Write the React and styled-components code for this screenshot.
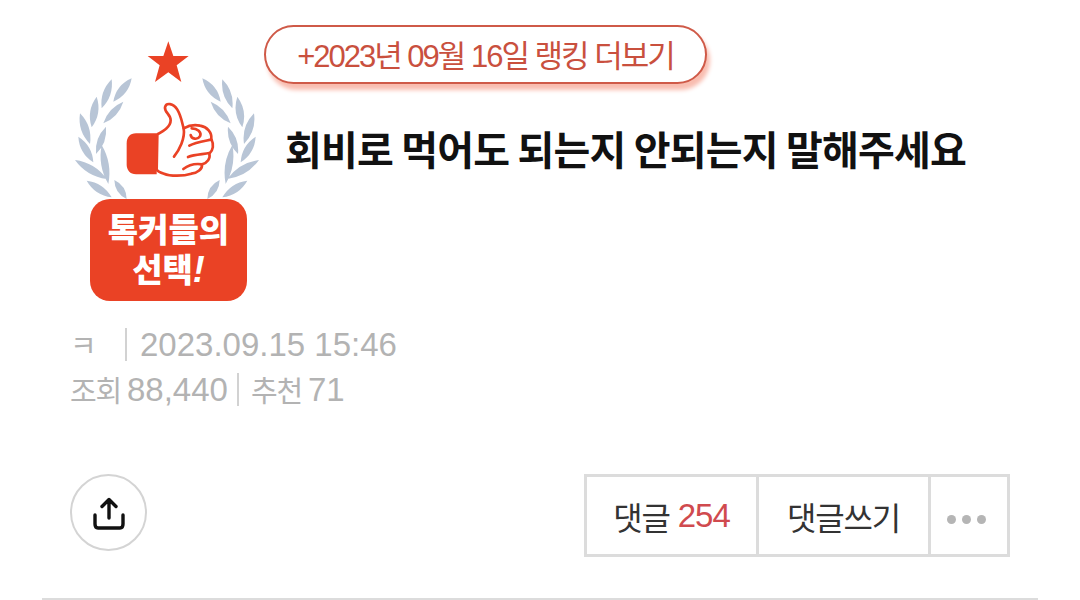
import React from "react";
import styled, { createGlobalStyle } from "styled-components";

const GlobalStyle = createGlobalStyle`
  html, body {
    margin: 0;
    background: #fff;
    font-family: "Liberation Sans", "Noto Sans CJK KR", sans-serif;
  }
`;

const Page = styled.div`
  width: 1080px;
  height: 600px;
  overflow: hidden;
  display: flex;
  flex-direction: column;
  box-sizing: border-box;
  padding: 24px 42px 0;
`;

const Header = styled.header`
  display: flex;
  align-items: flex-start;
  padding-left: 28px;
`;

const BadgeBox = styled.div`
  width: 194px;
  flex: none;
  display: flex;
  flex-direction: column;
  align-items: flex-start;
  padding-top: 6px;
`;

const BadgeArt = styled.svg`
  display: block;
  width: 194px;
  height: 190px;
`;

const BadgeLabel = styled.div`
  position: relative;
  box-sizing: border-box;
  margin: -21px 0 0 20px;
  padding-bottom: 2px;
  width: 157px;
  height: 102px;
  border-radius: 20px;
  background: #ea4225;
  color: #fff;
  display: flex;
  flex-direction: column;
  align-items: center;
  justify-content: center;
  font-family: "Noto Sans CJK KR", sans-serif;
  font-weight: 900;
  font-size: 33px;
  line-height: 40px;

  em {
    font-family: "Liberation Sans", sans-serif;
    font-size: 36px;
    font-weight: 700;
    font-style: italic;
  }
`;

const Content = styled.div`
  display: flex;
  flex-direction: column;
  align-items: flex-start;
`;

const MorePill = styled.a`
  box-sizing: border-box;
  width: 443px;
  height: 59px;
  margin-top: 1px;
  padding-bottom: 2px;
  display: flex;
  align-items: center;
  justify-content: center;
  border: 2.5px solid #cf5a48;
  border-radius: 30px;
  background: #fff;
  box-shadow: 3px 6px 4px #f9bdb0;
  color: #c9503e;
  font-family: "Liberation Sans", "Noto Sans CJK KR", sans-serif;
  font-size: 31px;
  letter-spacing: -2px;
  white-space: nowrap;
`;

const Title = styled.h1`
  margin: 36px 0 0 21px;
  color: #111;
  font-family: "Noto Sans CJK KR", sans-serif;
  font-size: 40px;
  line-height: 56px;
  font-weight: 700;
  letter-spacing: -0.8px;
  white-space: nowrap;
`;

const Meta = styled.div`
  margin: 21px 0 0 28px;
  color: #b3b3b3;
  font-size: 33px;
  line-height: 45px;
`;

const MetaRow = styled.div`
  display: flex;
  align-items: center;
  white-space: nowrap;
`;

const Hangul = styled.span`
  font-family: "Noto Sans CJK KR", sans-serif;
  font-size: 29px;
  letter-spacing: -1.2px;
  width: ${(p) => p.$width || "auto"};
  margin-right: ${(p) => p.$gap || "0"};
`;

const Bar = styled.span`
  width: 2px;
  height: 33px;
  background: #d2d2d2;
  margin: ${(p) => p.$margin};
`;

const Actions = styled.div`
  display: flex;
  align-items: center;
  justify-content: space-between;
  margin: 62px 28px 0;
`;

const ShareButton = styled.button`
  box-sizing: border-box;
  width: 77px;
  height: 77px;
  padding: 0;
  border: 2px solid #d4d4d4;
  border-radius: 50%;
  background: #fff;
  display: flex;
  align-items: center;
  justify-content: center;
  margin-top: -6px;
`;

const ShareIcon = styled.svg`
  display: block;
  width: 38px;
  height: 38px;
  margin-top: 6px;
`;

const ButtonGroup = styled.div`
  display: flex;
  box-sizing: border-box;
  height: 83px;
  border: 3px solid #dcdcdc;
`;

const GroupButton = styled.div`
  box-sizing: border-box;
  width: ${(p) => p.$width};
  display: flex;
  align-items: center;
  justify-content: center;
  gap: 8px;
  color: #333;
  font-family: "Noto Sans CJK KR", sans-serif;
  font-size: 32px;
  letter-spacing: -1.2px;
  white-space: nowrap;

  & + & {
    border-left: 3px solid #dcdcdc;
  }
`;

const Count = styled.span`
  color: #d04a4e;
  font-family: "Liberation Sans", sans-serif;
  font-size: 33px;
  letter-spacing: -1px;
`;

const Dots = styled.div`
  display: flex;
  gap: 6px;
  margin: 8px 5px 0 0;
`;

const Dot = styled.span`
  width: 9px;
  height: 9px;
  border-radius: 50%;
  background: #b5b5b5;
`;

const Divider = styled.hr`
  margin: auto 0 0;
  width: 100%;
  height: 2px;
  border: 0;
  background: #dcdcdc;
`;

// start x, start y, end x, end y, bulge
const leaves = [
  [160, 215, 215, 145, 16],
  [125, 235, 155, 148, 15],
  [130, 280, 190, 215, 14],
  [95, 292, 110, 200, 16],
  [108, 372, 138, 290, 14],
  [90, 342, 60, 250, 16],
  [100, 397, 55, 320, 15],
  [145, 462, 125, 345, 15],
  [140, 447, 45, 390, 16],
  [155, 502, 80, 452, 15],
  [200, 507, 163, 450, 14],
];

const leafPath = ([ax, ay, bx, by, w]) => {
  const mx = (ax + bx) / 2;
  const my = (ay + by) / 2;
  const len = Math.hypot(bx - ax, by - ay);
  const nx = ((by - ay) / len) * w * 1.5;
  const ny = (-(bx - ax) / len) * w * 1.5;
  return `M${ax} ${ay}Q${mx + nx} ${my + ny} ${bx} ${by}Q${mx - nx} ${my - ny} ${ax} ${ay}Z`;
};

function BadgeDrawing() {
  const wreath = leaves.map((leaf) => leafPath(leaf)).join("");
  return (
    <BadgeArt viewBox="30 0 582 570" aria-hidden="true">
      <path fill="#b8c5d6" d={wreath} />
      <path fill="#b8c5d6" d={wreath} transform="translate(642 0) scale(-1 1)" />
      <path
        fill="#ea4225"
        d="M325 34L340 78L386 78L350 106L364 156L325 127L285 156L299 106L263 78L310 78Z"
      />
      <g transform="translate(180 195)">
        <path
          fill="#ea4225"
          d="M110 115H48C30 115 20 127 20 145V208C20 226 30 238 48 238H110Z"
        />
        <path
          fill="#fff"
          stroke="#ea4225"
          strokeWidth="8"
          strokeLinejoin="round"
          d="M112 118C130 108 152 96 152 76C152 58 133 52 135 37C138 22 160 24 172 44C184 64 186 84 191 100C205 92 222 88 240 92C262 96 276 112 274 132C282 148 280 166 268 176C272 190 262 204 246 208C248 222 232 234 214 236C190 244 150 244 132 236C118 232 112 228 110 224Z"
        />
        <path
          fill="none"
          stroke="#ea4225"
          strokeWidth="8"
          strokeLinecap="round"
          d="M191 100C196 130 178 165 162 185M215 100C232 100 246 112 240 124C232 136 214 132 212 120M208 152C226 142 256 138 274 134M204 186C224 178 250 178 268 174M190 222C208 208 232 206 246 208"
        />
      </g>
    </BadgeArt>
  );
}

export default function App() {
  return (
    <>
      <GlobalStyle />
      <Page>
        <Header>
          <BadgeBox>
            <BadgeDrawing />
            <BadgeLabel>
              <div>톡커들의</div>
              <div>
                선택<em>!</em>
              </div>
            </BadgeLabel>
          </BadgeBox>
          <Content>
            <MorePill>+2023년 09월 16일 랭킹 더보기</MorePill>
            <Title>회비로 먹어도 되는지 안되는지 말해주세요</Title>
          </Content>
        </Header>
        <Meta>
          <MetaRow>
            <Hangul $width="55px">ㅋ</Hangul>
            <Bar $margin="0 13px 0 0" />
            2023.09.15 15:46
          </MetaRow>
          <MetaRow>
            <Hangul $gap="6px">조회</Hangul>
            88,440
            <Bar $margin="0 12px 0 9px" />
            <Hangul $gap="6px">추천</Hangul>
            71
          </MetaRow>
        </Meta>
        <Actions>
          <ShareButton aria-label="공유">
            <ShareIcon viewBox="0 0 38 38" fill="none" stroke="#111" strokeWidth="3.4" strokeLinecap="round" strokeLinejoin="round">
              <path d="M19 3V21M12 9.5L19 2.5L26 9.5" />
              <path d="M5 18V27C5 30 6 31 8 31H30C32 31 33 30 33 27V18" />
            </ShareIcon>
          </ShareButton>
          <ButtonGroup>
            <GroupButton $width="169px">
              댓글 <Count>254</Count>
            </GroupButton>
            <GroupButton $width="172px">댓글쓰기</GroupButton>
            <GroupButton $width="79px">
              <Dots>
                <Dot />
                <Dot />
                <Dot />
              </Dots>
            </GroupButton>
          </ButtonGroup>
        </Actions>
        <Divider />
      </Page>
    </>
  );
}
